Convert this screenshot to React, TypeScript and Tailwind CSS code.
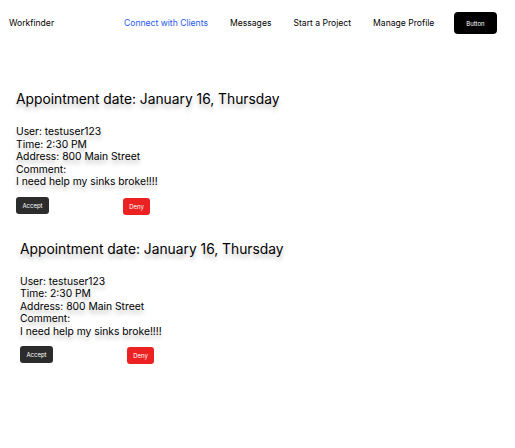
import React from "react";

const shadow = "[text-shadow:0_4px_4px_rgba(0,0,0,0.25)]";

function Card({ className }: { className: string }) {
  return (
    <div className={`flex flex-col ${className}`}>
      <h2 className={`text-[13.8px] leading-[17px] text-black ${shadow}`}>
        Appointment date: January 16, Thursday
      </h2>
      <div className={`mt-[17px] text-[10.3px] leading-[12.5px] text-black ${shadow}`}>
        <p>User: testuser123</p>
        <p>Time: 2:30 PM</p>
        <p>Address: 800 Main Street</p>
        <p>Comment:</p>
        <p>I need help my sinks broke!!!!</p>
      </div>
      <div className="mt-[9px] flex items-start">
        <button className="h-[17px] w-[33px] rounded-[3px] bg-[#2c2c2c] text-[6px] text-white">
          Accept
        </button>
        <button className="ml-[74px] mt-[1px] h-[17px] w-[27px] rounded-[3px] bg-[#ec2222] text-[6px] text-white">
          Deny
        </button>
      </div>
    </div>
  );
}

export default function App() {
  return (
    <div className="min-h-[448px] w-[515px] bg-white font-['Inter',sans-serif]">
      <header className="flex h-[46px] items-center pl-[9px] pr-[18px] text-[8.6px] text-black">
        <div className="w-[115px]">Workfinder</div>
        <nav className="flex items-center gap-[22px]">
          <a className="text-[#2458f5]">Connect with Clients</a>
          <a>Messages</a>
          <a>Start a Project</a>
          <a>Manage Profile</a>
        </nav>
        <button className="ml-auto h-[22px] w-[43px] rounded-[4px] bg-black text-[6px] text-white">
          Button
        </button>
      </header>
      <main className="pt-[45px]">
        <Card className="pl-[16px]" />
        <Card className="mt-[26px] pl-[20px]" />
      </main>
    </div>
  );
}
